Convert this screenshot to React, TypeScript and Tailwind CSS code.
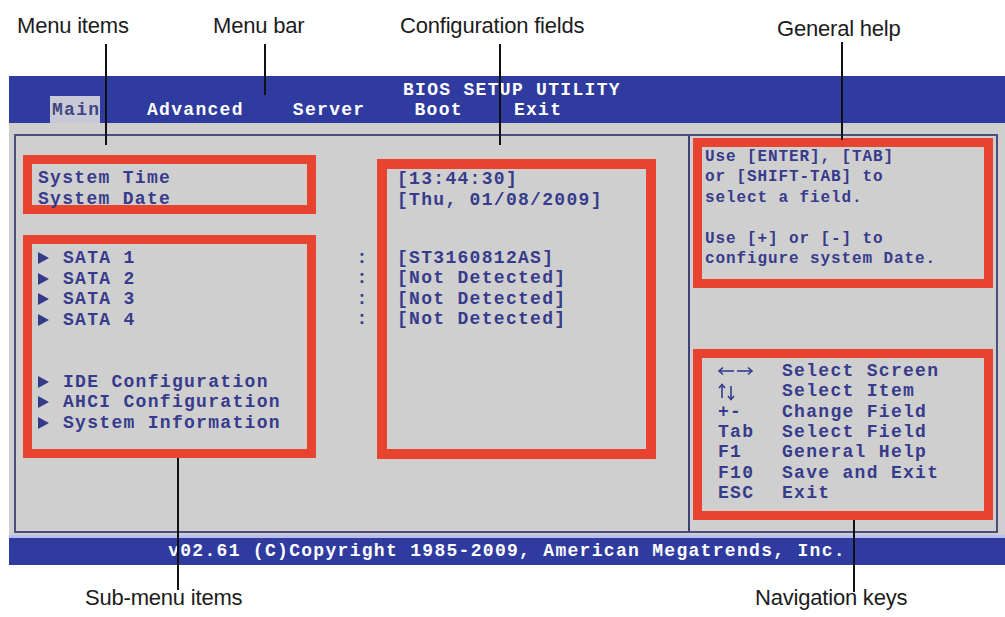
import React from "react";

const TEXT = "text-[#373b8b]";
const MONO = "font-['Liberation_Mono','Courier_New',monospace] font-bold";
const MAIN = `${MONO} text-[18px] tracking-[1.3px] leading-[20.6px]`;
const HELP = `${MONO} text-[16px] tracking-[0.9px] leading-[20.4px]`;
const RED = "border-[#e8432f]";

function Tri() {
  return (
    <span className="inline-block w-[25px] align-middle">
      <svg width="11" height="12" viewBox="0 0 11 12" className="block">
        <polygon points="0,0 11,6 0,12" fill="#34398a" />
      </svg>
    </span>
  );
}

function Sub({ label }: { label: string }) {
  return (
    <div className="flex items-center whitespace-pre">
      <Tri />
      <span>{label}</span>
    </div>
  );
}

function LeftRightArrows() {
  return (
    <svg width="36" height="10" viewBox="0 0 36 10" className="block">
      <g stroke="#373b8b" strokeWidth="1.6" fill="none">
        <line x1="1" y1="5" x2="16" y2="5" />
        <polyline points="5,1.5 1,5 5,8.5" />
        <line x1="19" y1="5" x2="34" y2="5" />
        <polyline points="30,1.5 34,5 30,8.5" />
      </g>
    </svg>
  );
}

function UpDownArrows() {
  return (
    <svg width="18" height="18" viewBox="0 0 18 18" className="block">
      <g stroke="#373b8b" strokeWidth="1.6" fill="none">
        <line x1="4" y1="2" x2="4" y2="15" />
        <polyline points="1,5 4,1.5 7,5" />
        <line x1="13" y1="3" x2="13" y2="16" />
        <polyline points="10,13 13,16.5 16,13" />
      </g>
    </svg>
  );
}

function Label({ text, cls }: { text: string; cls: string }) {
  return (
    <div
      className={`absolute ${cls} text-[22px] leading-[25px] tracking-[-0.2px] text-[#1c1c1c] font-['Liberation_Sans',Arial,sans-serif] whitespace-nowrap`}
    >
      {text}
    </div>
  );
}

function VLine({ cls }: { cls: string }) {
  return <div className={`absolute w-[2px] bg-[#111] ${cls}`} />;
}

export default function App() {
  const navRows: [React.ReactNode, string][] = [
    [<LeftRightArrows />, "Select Screen"],
    [<UpDownArrows />, "Select Item"],
    ["+-", "Change Field"],
    ["Tab", "Select Field"],
    ["F1", "General Help"],
    ["F10", "Save and Exit"],
    ["ESC", "Exit"],
  ];

  return (
    <div className="relative w-[1005px] h-[617px] bg-white overflow-hidden">
      <div className="h-[76px]" />

      <div className="ml-[9px] w-[996px]">
        {/* Header */}
        <div className={`h-[47px] bg-[#2f3b9f] text-white ${MONO} text-[18px] tracking-[1.3px]`}>
          <div className="h-[20px] pt-[8px] leading-[12px] pl-[394px] whitespace-pre">BIOS SETUP UTILITY</div>
          <div className="flex h-[27px] items-center whitespace-pre leading-[16px]">
            <div className="ml-[41px] flex h-full w-[50px] flex-none items-center bg-[#c8c9d6] pl-[2px] text-[#41467f]">
              Main
            </div>
            <div className="ml-[47px] flex-none">Advanced</div>
            <div className="ml-[49px] flex-none">Server</div>
            <div className="ml-[49px] flex-none">Boot</div>
            <div className="ml-[51px] flex-none">Exit</div>
          </div>
        </div>

        {/* Body */}
        <div className="bg-[#cfcfcf] pt-[11px] pl-[5px] pr-[7px] pb-[2px]">
          <div className={`flex h-[399px] border-2 border-[#4a4d7d] ${TEXT}`}>
            {/* Left pane */}
            <div className="flex w-[674px] flex-none items-start border-r-2 border-[#3d4178]">
              <div className="ml-[7px] w-[293px] flex-none">
                <div className={`mt-[19px] h-[59px] border-[9px] ${RED} pl-[6px] pt-[4px] ${MAIN}`}>
                  <div className="whitespace-pre">System Time</div>
                  <div className="whitespace-pre">System Date</div>
                </div>
                <div className={`mt-[21px] h-[223px] border-[9px] ${RED} pl-[6px] pt-[4px] ${MAIN}`}>
                  <Sub label="SATA 1" />
                  <Sub label="SATA 2" />
                  <Sub label="SATA 3" />
                  <Sub label="SATA 4" />
                  <div className="h-[41.2px]" />
                  <Sub label="IDE Configuration" />
                  <Sub label="AHCI Configuration" />
                  <Sub label="System Information" />
                </div>
              </div>

              <div className={`ml-[40px] mt-[111.7px] w-[12px] flex-none text-center ${MONO} text-[18px] leading-[20.6px]`}>
                <div>:</div>
                <div>:</div>
                <div>:</div>
                <div>:</div>
              </div>

              <div className={`ml-[9px] mt-[23px] h-[300px] w-[279px] flex-none border-[10px] ${RED} pl-[10px] ${MAIN}`}>
                <div className="whitespace-pre">[13:44:30]</div>
                <div className="whitespace-pre">[Thu, 01/08/2009]</div>
                <div className="h-[37.5px]" />
                <div className="whitespace-pre">[ST3160812AS]</div>
                <div className="whitespace-pre">[Not Detected]</div>
                <div className="whitespace-pre">[Not Detected]</div>
                <div className="whitespace-pre">[Not Detected]</div>
              </div>
            </div>

            {/* Right pane */}
            <div className="flex-1 pl-[3px] pt-[2px]">
              <div className={`h-[150px] w-[300px] border-[9px] ${RED} pl-[3px] ${HELP}`}>
                <div className="whitespace-pre">Use [ENTER], [TAB]</div>
                <div className="whitespace-pre">or [SHIFT-TAB] to</div>
                <div className="whitespace-pre">select a field.</div>
                <div className="h-[20.4px]" />
                <div className="whitespace-pre">Use [+] or [-] to</div>
                <div className="whitespace-pre">configure system Date.</div>
              </div>
              <div className={`mt-[61px] h-[171px] w-[300px] border-[9px] ${RED} pl-[16px] pt-[3px] ${MAIN}`}>
                {navRows.map(([k, d], i) => (
                  <div key={i} className="flex h-[20.4px] items-center whitespace-pre">
                    <div className="w-[64px] flex-none">{k}</div>
                    <div>{d}</div>
                  </div>
                ))}
              </div>
            </div>
          </div>
        </div>

        {/* Footer */}
        <div
          className={`h-[30px] border-t-[3px] border-[#b9bdf0] bg-[#2f3b9f] text-center text-white ${MONO} text-[18px] tracking-[1.3px] leading-[26px] whitespace-pre`}
        >
          v02.61 (C)Copyright 1985-2009, American Megatrends, Inc.
        </div>
      </div>

      {/* Annotations */}
      <Label text="Menu items" cls="left-[17px] top-[13px]" />
      <Label text="Menu bar" cls="left-[213px] top-[13px]" />
      <Label text="Configuration fields" cls="left-[400px] top-[13px]" />
      <Label text="General help" cls="left-[777px] top-[16px]" />
      <Label text="Sub-menu items" cls="left-[85px] top-[585px]" />
      <Label text="Navigation keys" cls="left-[755px] top-[585px]" />

      <VLine cls="left-[105px] top-[44px] h-[101px]" />
      <VLine cls="left-[264px] top-[44px] h-[51px]" />
      <VLine cls="left-[499px] top-[44px] h-[101px]" />
      <VLine cls="left-[841px] top-[42px] h-[98px]" />
      <VLine cls="left-[177px] top-[458px] h-[132px]" />
      <VLine cls="left-[853px] top-[520px] h-[72px]" />
    </div>
  );
}
